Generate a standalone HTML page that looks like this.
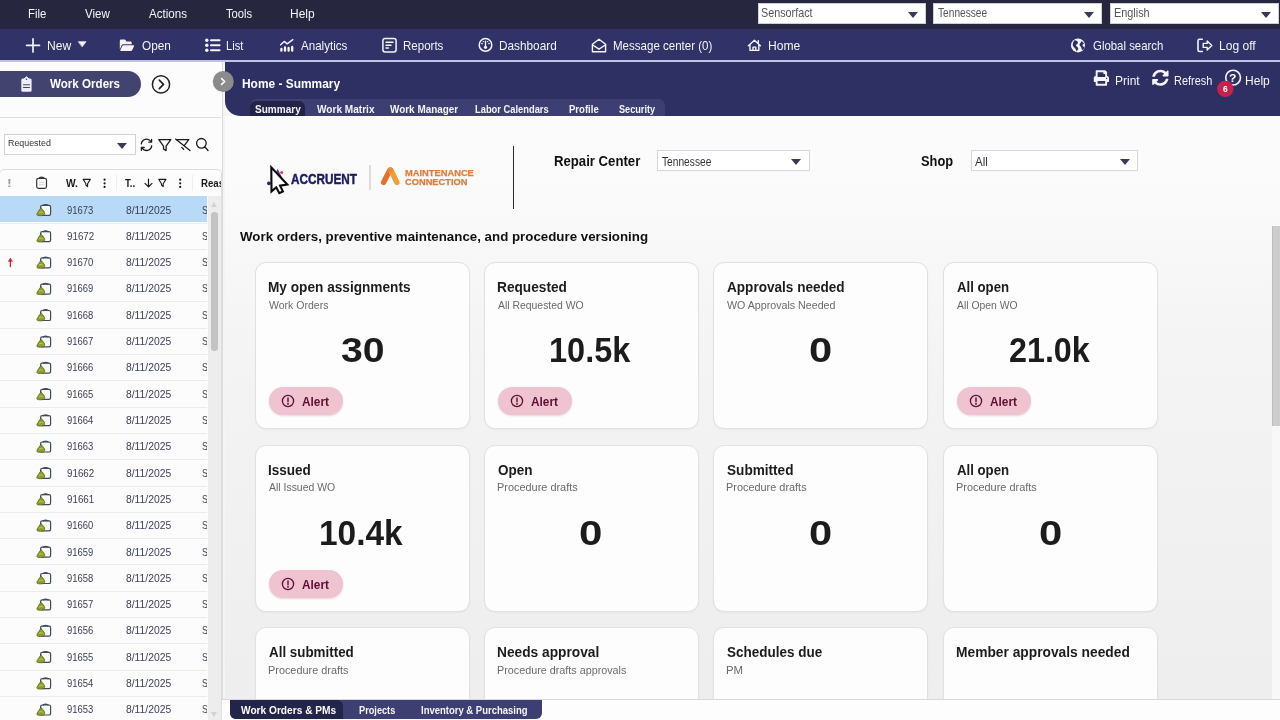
<!DOCTYPE html>
<html lang="en">
<head>
<meta charset="utf-8">
<title>Home - Summary</title>
<style>
*{box-sizing:border-box;margin:0;padding:0}
html,body{width:1280px;height:720px;overflow:hidden;background:#f6f6f6;font-family:"Liberation Sans",sans-serif;color:#111}
#app{position:relative;width:1280px;height:720px;overflow:hidden}
.abs,.layer,.t,.card,.alert,.rl,.selbox{position:absolute}
.layer{left:0;top:0;width:1280px;height:720px;pointer-events:none;will-change:transform}
#left-text{width:221px;overflow:hidden}
#rows-text{width:207px;overflow:hidden}
.t{white-space:pre;line-height:1;transform-origin:0 50%}
svg{overflow:visible}
#menubar{left:0;top:0;width:1280px;height:28.5px;background:#26273f}
#toolbar{left:0;top:28.5px;width:1280px;height:31.5px;background:#303268}
#toolline{left:0;top:60.1px;width:1280px;height:1.8px;background:#bfc2e6}
.selbox{background:#fff;border:1px solid #cfcfd6}
.caret{position:absolute;width:0;height:0;border-left:5.6px solid transparent;border-right:5.6px solid transparent;border-top:6.6px solid #3a3a58}
#leftbg{left:0;top:61.6px;width:221.5px;height:659px;background:#fcfcfc}
#splitter{left:221.5px;top:61.6px;width:3.5px;height:659px;background:#f4f4f4;border-left:1px solid #dcdcdc}
#pill{left:-20px;top:70.7px;width:161px;height:26px;border-radius:13px;background:#42446f}
#gridbox{left:-1px;top:169.2px;width:222.5px;height:560px;border:1px solid #dedede;border-radius:5px 5px 0 0;background:#fcfcfc}
#rowsel{left:0;top:196.2px;width:207px;height:26.3px;background:#b9daf6}
.rl{left:0;width:207px;height:1px;background:#ececec}
#vtrack{left:207.5px;top:196.2px;width:13.5px;height:524px;background:#ededed}
#vthumb{left:211px;top:212px;width:6.5px;height:139px;background:#c4c4c4;border-radius:3px}
#header{left:225px;top:61.6px;width:1056px;height:54.6px;background:#2e3064;border-bottom-left-radius:15px}
#tabstrip{left:250px;top:99px;width:414.5px;height:17.2px;background:#3d3f72;border-radius:7px 7px 0 0}
#tabact{left:250px;top:100.5px;width:54.5px;height:15.7px;background:#222347;border-radius:6px 6px 0 0}
#contentbg{left:225px;top:116.2px;width:1055px;height:583px;background:linear-gradient(#fcfcfc 0,#f9f9f9 18%,#f3f3f3 45%,#eeeeee 100%)}
.card{width:215.2px;height:167.0px;background:#fdfdfd;border:1px solid #e1e1e1;border-radius:11px;box-shadow:0 1px 2px rgba(0,0,0,.04)}
.alert{width:74.5px;height:27.6px;border-radius:14px;background:#efc3d0;box-shadow:0 1px 2px rgba(120,40,70,.18)}
#rtrack{left:1271.5px;top:226px;width:9px;height:473px;background:#f8f8f8}
#rthumb{left:1271.5px;top:226px;width:9px;height:200px;background:#cdcdcd;border-left:1px solid #bdbdbd}
#bottombar{left:222px;top:699px;width:1058px;height:21px;background:#fdfdfd;border-top:1px solid #d9d9d9}
#btabs{left:230px;top:700px;width:312px;height:19.3px;background:#3d3f72;border-radius:0 0 6px 6px}
#btabact{left:230px;top:700px;width:112.5px;height:19.3px;background:#232449;border-radius:0 6px 0 6px}
</style>
</head>
<body>
<div id="app">

<!-- ================= MENU BAR ================= -->
<div id="menubar" class="abs"></div>
<div class="selbox" style="left:757.8px;top:2.8px;width:168.6px;height:20.8px"></div>
<div class="selbox" style="left:933.3px;top:2.8px;width:168.4px;height:20.8px"></div>
<div class="selbox" style="left:1110px;top:2.8px;width:169.2px;height:20.8px"></div>
<i class="caret" style="left:908.2px;top:11.9px"></i>
<i class="caret" style="left:1083.7px;top:11.9px"></i>
<i class="caret" style="left:1260.6px;top:11.9px"></i>
<div class="layer" id="menu-text">
<span class="t" style="left:27.5px;top:8px;font-size:12.5px;color:#f4f4fa;transform:scaleX(0.911);">File</span>
<span class="t" style="left:84.5px;top:8px;font-size:12.5px;color:#f4f4fa;transform:scaleX(0.922);">View</span>
<span class="t" style="left:148.7px;top:8px;font-size:12.5px;color:#f4f4fa;transform:scaleX(0.927);">Actions</span>
<span class="t" style="left:225.8px;top:8px;font-size:12.5px;color:#f4f4fa;transform:scaleX(0.897);">Tools</span>
<span class="t" style="left:290.4px;top:8px;font-size:12.5px;color:#f4f4fa;transform:scaleX(0.956);">Help</span>
<span class="t" style="left:760.9px;top:7px;font-size:12px;color:#555;transform:scaleX(0.898);">Sensorfact</span>
<span class="t" style="left:937.9px;top:7px;font-size:12px;color:#555;transform:scaleX(0.847);">Tennessee</span>
<span class="t" style="left:1113.7px;top:7px;font-size:12px;color:#555;transform:scaleX(0.905);">English</span>
</div>

<!-- ================= TOOLBAR ================= -->
<div id="toolbar" class="abs"></div>
<div id="toolline" class="abs"></div>
<svg class="abs" style="left:0;top:0" width="1280" height="62" viewBox="0 0 1280 62" fill="none" stroke="#f4f4fa" stroke-linecap="round" stroke-linejoin="round">
  <path d="M26.6 45.3H39.5M33 38.8V51.9" stroke-width="1.7"/>
  <path d="M78.6 41.7h7.4l-3.7 4.9z" fill="#f4f4fa" stroke-width=".7"/>
  <g transform="translate(119.8 37.550) scale(.0248 .0300)"><path d="M572.694 292.093L500.27 416.248A63.997 63.997 0 0 1 444.989 448H45.025c-18.523 0-30.064-20.093-20.731-36.093l72.424-124.155A64 64 0 0 1 152 256h399.964c18.523 0 30.064 20.093 20.73 36.093zM152 224h328v-48c0-26.51-21.49-48-48-48H272l-64-64H48C21.49 64 0 85.49 0 112v278.046l69.077-118.418C86.214 242.25 117.989 224 152 224z" fill="#f4f4fa" stroke="none"/></g>
  <g stroke-width="2.1"><path d="M211 40.3H219.5M211 45.3H219.5M211 50.3H219.5"/></g>
  <g fill="#f4f4fa" stroke="none"><circle cx="206.8" cy="40.3" r="1.7"/><circle cx="206.8" cy="45.3" r="1.7"/><circle cx="206.8" cy="50.3" r="1.7"/></g>
  <path d="M280.6 44.8L284.2 41.4L287.2 43.9L292.8 39.6" stroke-width="1.4"/>
  <path d="M281.4 49V50.7M285 47.5V50.7M288.6 48V50.7M292.2 47V50.7" stroke-width="2.3"/>
  <rect x="382.9" y="38.5" width="13.2" height="13.4" rx="2.2" stroke-width="1.5"/>
  <path d="M386 42.3H393M386 45.2H391M386 48.1H388.3" stroke-width="1.5"/>
  <circle cx="485.5" cy="44.9" r="6.3" stroke-width="1.5"/>
  <path d="M485.5 41.2V46.6" stroke-width="1.3"/>
  <g fill="#f4f4fa" stroke="none"><circle cx="485.5" cy="47.3" r="1.6"/><circle cx="482" cy="43.6" r=".8"/><circle cx="489" cy="43.6" r=".8"/><circle cx="483.4" cy="41.6" r=".7"/><circle cx="487.6" cy="41.6" r=".7"/></g>
  <path d="M592.4 44.3L599 39.2L605.6 44.3V51.8H592.4Z" stroke-width="1.4"/>
  <path d="M592.7 45L599 49.2L605.3 45" stroke-width="1.4"/>
  <path d="M748.4 45.7L754.4 40.2L760.4 45.7M750 44.6V50.4H758.8V44.6M753 50.4V47.1H755.8V50.4M758.3 40.6V42.6" stroke-width="1.4"/>
  <circle cx="1078" cy="45.4" r="7" fill="#f4f4fa" stroke="none"/>
  <path d="M1074.2 40.4c1.6-.3 3 .5 3.6 1.7.5 1.1-.4 1.9-1.3 2.5-1 .7-.3 1.9.7 2.3 1.2.5 1.4 1.7.7 2.7l-1.2 2c-.6-1.5-1.1-2.9-2.2-3.9-1.1-1-2.2-2.4-1.7-4 .3-1.2.6-2.3 1.4-3.3zM1081.3 41.3c.9.3 2 1.2 2.7 2.4-.9.2-1.6.900-1.5 1.9.1 1 1.2 1.3 2.1 1.2-.2 1.3-.8 2.5-1.7 3.4-.9-.5-1.5-1.4-1.6-2.4-.1-1-1.1-1.5-1.6-2.3-.5-.9.1-1.8.7-2.5.4-.5.7-1.1.9-1.7z" fill="#2c2e63" stroke="none"/>
  <path d="M1202.3 39.3H1199.6a1.6 1.6 0 0 0-1.6 1.6V49.9a1.6 1.6 0 0 0 1.6 1.6H1202.3" stroke-width="1.6"/>
  <path d="M1203.2 43.4H1207.2V40.9L1211.8 45.4L1207.2 49.9V47.4H1203.2Z" stroke-width="1.4"/>
</svg>
<div class="layer" id="tool-text">
<span class="t" style="left:46.9px;top:40px;font-size:12.6px;color:#f4f4fa;transform:scaleX(0.963);">New</span>
<span class="t" style="left:142.3px;top:40px;font-size:12.6px;color:#f4f4fa;transform:scaleX(0.937);">Open</span>
<span class="t" style="left:226.4px;top:40px;font-size:12.6px;color:#f4f4fa;transform:scaleX(0.884);">List</span>
<span class="t" style="left:301.0px;top:40px;font-size:12.6px;color:#f4f4fa;transform:scaleX(0.920);">Analytics</span>
<span class="t" style="left:403.2px;top:40px;font-size:12.6px;color:#f4f4fa;transform:scaleX(0.916);">Reports</span>
<span class="t" style="left:499.4px;top:40px;font-size:12.6px;color:#f4f4fa;transform:scaleX(0.937);">Dashboard</span>
<span class="t" style="left:612.9px;top:40px;font-size:12.6px;color:#f4f4fa;transform:scaleX(0.916);">Message center (0)</span>
<span class="t" style="left:768.0px;top:40px;font-size:12.6px;color:#f4f4fa;transform:scaleX(0.962);">Home</span>
<span class="t" style="left:1092.5px;top:40px;font-size:12.6px;color:#f4f4fa;transform:scaleX(0.906);">Global search</span>
<span class="t" style="left:1218.6px;top:40px;font-size:12.6px;color:#f4f4fa;transform:scaleX(0.958);">Log off</span>
</div>

<!-- ================= LEFT PANEL ================= -->
<div id="leftbg" class="abs"></div>
<div id="pill" class="abs"></div>
<div class="abs" style="left:0;top:116.8px;width:221px;height:1px;background:#dfdfdf"></div>
<div class="selbox" style="left:4.3px;top:134.3px;width:131.8px;height:20.4px;border-color:#d2d2d2"></div>
<i class="caret" style="left:117.2px;top:143.2px;border-left-width:5.2px;border-right-width:5.2px;border-top-width:6.4px"></i>
<div id="gridbox" class="abs"></div>
<div id="rowsel" class="abs"></div>
<div class="rl" style="top:222.5px"></div><div class="rl" style="top:248.8px"></div><div class="rl" style="top:275.1px"></div><div class="rl" style="top:301.4px"></div><div class="rl" style="top:327.7px"></div><div class="rl" style="top:354.0px"></div><div class="rl" style="top:380.3px"></div><div class="rl" style="top:406.6px"></div><div class="rl" style="top:432.9px"></div><div class="rl" style="top:459.2px"></div><div class="rl" style="top:485.5px"></div><div class="rl" style="top:511.8px"></div><div class="rl" style="top:538.1px"></div><div class="rl" style="top:564.4px"></div><div class="rl" style="top:590.7px"></div><div class="rl" style="top:617.0px"></div><div class="rl" style="top:643.3px"></div><div class="rl" style="top:669.6px"></div><div class="rl" style="top:695.9px"></div><div class="rl" style="top:722.2px"></div>
<div id="vtrack" class="abs"></div>
<div id="vthumb" class="abs"></div>
<div class="abs" style="left:210.8px;top:201.5px;width:0;height:0;border-left:3.8px solid transparent;border-right:3.8px solid transparent;border-bottom:5px solid #d3d3d3"></div>
<div class="abs" style="left:210.8px;top:711.5px;width:0;height:0;border-left:3.8px solid transparent;border-right:3.8px solid transparent;border-top:5px solid #d3d3d3"></div>
<div class="abs" style="left:116.2px;top:175px;width:1px;height:16px;background:#ededed"></div>
<div class="abs" style="left:192.3px;top:175px;width:1px;height:16px;background:#ededed"></div>
<svg class="abs" style="left:0;top:0" width="226" height="720" viewBox="0 0 226 720" fill="none" stroke-linecap="round" stroke-linejoin="round">
  <!-- work orders clipboard -->
  <rect x="21.3" y="78.6" width="10.3" height="13.2" rx="1.5" fill="#eeeefc"/>
  <path d="M23.8 79.2L26.450 76.7L29.1 79.2Z" fill="#eeeefc" stroke="#eeeefc" stroke-width="1"/>
  <circle cx="26.450" cy="79.3" r=".8" fill="#42446f"/>
  <path d="M23.4 84.8H29.5M23.4 87.5H29.5" stroke="#42446f" stroke-width="1.1"/>
  <!-- circle arrow -->
  <circle cx="161" cy="84.4" r="8.6" stroke="#222" stroke-width="1.5"/>
  <path d="M159.3 80.2L163.5 84.4L159.3 88.6" stroke="#222" stroke-width="1.7"/>
  <!-- list toolbar icons -->
  <g stroke="#1a1a1a" stroke-width="1.3">
    <path d="M141.3 143.8a5.3 5.3 0 0 1 9.6-2.4M151.7 145.8a5.3 5.3 0 0 1-9.6 2.4"/>
    <path d="M151.6 139.3V142.1H148.8M141.4 150.3V147.5H144.2"/>
    <path d="M201.4 143.3m-4.8 0a4.8 4.8 0 1 0 9.6 0a4.8 4.8 0 1 0-9.6 0M204.9 146.9L208 150.5"/>
    <path d="M176.6 139.6H188.8L184.2 145.6M181.7 147.4L183.6 149.2"/>
    <path d="M175.6 139.1L190 150.5"/>
  </g>
  <path d="M158.8 139.6H170.8L166.1 146.1V150.6L163.5 149.0V146.1Z" fill="none" stroke="#1a1a1a" stroke-width="1.3" stroke-linejoin="round"/>
  <!-- grid header icons -->
  <rect x="36.7" y="178.3" width="9.8" height="10" rx="1.8" stroke="#333" stroke-width="1.2"/>
  <path d="M39.3 178.2c0-1.4 4.6-1.4 4.6 0" stroke="#333" stroke-width="1.2"/>
  <path d="M39.4 182.3H43.8M39.4 184.8H43.8" stroke="#cfcfcf" stroke-width="1"/>
  <path d="M83.2 179.4H90.3L87.6 183.7V186.6L85.9 185.0V183.7Z" fill="none" stroke="#1a1a1a" stroke-width="1.1" stroke-linejoin="round"/>
  <path d="M158.8 179.4H165.9L163.2 183.7V186.6L161.5 185.0V183.7Z" fill="none" stroke="#1a1a1a" stroke-width="1.1" stroke-linejoin="round"/>
  <g fill="#1a1a1a"><circle cx="104.6" cy="179.7" r="1.1"/><circle cx="104.6" cy="183.3" r="1.1"/><circle cx="104.6" cy="186.9" r="1.1"/>
  <circle cx="180.2" cy="179.7" r="1.1"/><circle cx="180.2" cy="183.3" r="1.1"/><circle cx="180.2" cy="186.9" r="1.1"/></g>
  <path d="M148.5 179V186.6M145 183.4L148.5 186.9L152 183.4" stroke="#1a1a1a" stroke-width="1.2"/>
  <!-- priority arrow -->
  <path d="M10.4 259V266.6" stroke="#d0202a" stroke-width="1.3"/><path d="M8.5 261.2L10.4 258.3L12.3 261.2Z" fill="#d0202a" stroke="#d0202a" stroke-width=".6"/>
  <!-- row icons -->
  <g transform="translate(0,204.2)"><rect x="40.6" y="1.1" width="10" height="10" rx="1.6" fill="#fbfbf6" stroke="#3f4a60" stroke-width="1.2"/><path d="M43.2 1.2c0-1.2 4.8-1.2 4.8 0" fill="#3f4a60" stroke="#3f4a60" stroke-width="1.2"/><path d="M40.9 3.6c1 .8 2.6 2.6 3.6 4.4.6 1.2-.2 2.6-1 3.1-1.3.500-4.3.500-5.8.100-.9-.3-1.1-1.1-.5-2 .8-1.7 2.5-3.9 3.7-5.6z" fill="#8f9d2a" stroke="#4d5a12" stroke-width=".7"/><path d="M39.2 8.2c1.2-.8 3-.8 3.8.2" fill="none" stroke="#c5cf68" stroke-width=".9"/></g><g transform="translate(0,230.5)"><rect x="40.6" y="1.1" width="10" height="10" rx="1.6" fill="#fbfbf6" stroke="#3f4a60" stroke-width="1.2"/><path d="M43.2 1.2c0-1.2 4.8-1.2 4.8 0" fill="#3f4a60" stroke="#3f4a60" stroke-width="1.2"/><path d="M40.9 3.6c1 .8 2.6 2.6 3.6 4.4.6 1.2-.2 2.6-1 3.1-1.3.500-4.3.500-5.8.100-.9-.3-1.1-1.1-.5-2 .8-1.7 2.5-3.9 3.7-5.6z" fill="#8f9d2a" stroke="#4d5a12" stroke-width=".7"/><path d="M39.2 8.2c1.2-.8 3-.8 3.8.2" fill="none" stroke="#c5cf68" stroke-width=".9"/></g><g transform="translate(0,256.8)"><rect x="40.6" y="1.1" width="10" height="10" rx="1.6" fill="#fbfbf6" stroke="#3f4a60" stroke-width="1.2"/><path d="M43.2 1.2c0-1.2 4.8-1.2 4.8 0" fill="#3f4a60" stroke="#3f4a60" stroke-width="1.2"/><path d="M40.9 3.6c1 .8 2.6 2.6 3.6 4.4.6 1.2-.2 2.6-1 3.1-1.3.500-4.3.500-5.8.100-.9-.3-1.1-1.1-.5-2 .8-1.7 2.5-3.9 3.7-5.6z" fill="#8f9d2a" stroke="#4d5a12" stroke-width=".7"/><path d="M39.2 8.2c1.2-.8 3-.8 3.8.2" fill="none" stroke="#c5cf68" stroke-width=".9"/></g><g transform="translate(0,283.1)"><rect x="40.6" y="1.1" width="10" height="10" rx="1.6" fill="#fbfbf6" stroke="#3f4a60" stroke-width="1.2"/><path d="M43.2 1.2c0-1.2 4.8-1.2 4.8 0" fill="#3f4a60" stroke="#3f4a60" stroke-width="1.2"/><path d="M40.9 3.6c1 .8 2.6 2.6 3.6 4.4.6 1.2-.2 2.6-1 3.1-1.3.500-4.3.500-5.8.100-.9-.3-1.1-1.1-.5-2 .8-1.7 2.5-3.9 3.7-5.6z" fill="#8f9d2a" stroke="#4d5a12" stroke-width=".7"/><path d="M39.2 8.2c1.2-.8 3-.8 3.8.2" fill="none" stroke="#c5cf68" stroke-width=".9"/></g><g transform="translate(0,309.4)"><rect x="40.6" y="1.1" width="10" height="10" rx="1.6" fill="#fbfbf6" stroke="#3f4a60" stroke-width="1.2"/><path d="M43.2 1.2c0-1.2 4.8-1.2 4.8 0" fill="#3f4a60" stroke="#3f4a60" stroke-width="1.2"/><path d="M40.9 3.6c1 .8 2.6 2.6 3.6 4.4.6 1.2-.2 2.6-1 3.1-1.3.500-4.3.500-5.8.100-.9-.3-1.1-1.1-.5-2 .8-1.7 2.5-3.9 3.7-5.6z" fill="#8f9d2a" stroke="#4d5a12" stroke-width=".7"/><path d="M39.2 8.2c1.2-.8 3-.8 3.8.2" fill="none" stroke="#c5cf68" stroke-width=".9"/></g><g transform="translate(0,335.7)"><rect x="40.6" y="1.1" width="10" height="10" rx="1.6" fill="#fbfbf6" stroke="#3f4a60" stroke-width="1.2"/><path d="M43.2 1.2c0-1.2 4.8-1.2 4.8 0" fill="#3f4a60" stroke="#3f4a60" stroke-width="1.2"/><path d="M40.9 3.6c1 .8 2.6 2.6 3.6 4.4.6 1.2-.2 2.6-1 3.1-1.3.500-4.3.500-5.8.100-.9-.3-1.1-1.1-.5-2 .8-1.7 2.5-3.9 3.7-5.6z" fill="#8f9d2a" stroke="#4d5a12" stroke-width=".7"/><path d="M39.2 8.2c1.2-.8 3-.8 3.8.2" fill="none" stroke="#c5cf68" stroke-width=".9"/></g><g transform="translate(0,362.0)"><rect x="40.6" y="1.1" width="10" height="10" rx="1.6" fill="#fbfbf6" stroke="#3f4a60" stroke-width="1.2"/><path d="M43.2 1.2c0-1.2 4.8-1.2 4.8 0" fill="#3f4a60" stroke="#3f4a60" stroke-width="1.2"/><path d="M40.9 3.6c1 .8 2.6 2.6 3.6 4.4.6 1.2-.2 2.6-1 3.1-1.3.500-4.3.500-5.8.100-.9-.3-1.1-1.1-.5-2 .8-1.7 2.5-3.9 3.7-5.6z" fill="#8f9d2a" stroke="#4d5a12" stroke-width=".7"/><path d="M39.2 8.2c1.2-.8 3-.8 3.8.2" fill="none" stroke="#c5cf68" stroke-width=".9"/></g><g transform="translate(0,388.3)"><rect x="40.6" y="1.1" width="10" height="10" rx="1.6" fill="#fbfbf6" stroke="#3f4a60" stroke-width="1.2"/><path d="M43.2 1.2c0-1.2 4.8-1.2 4.8 0" fill="#3f4a60" stroke="#3f4a60" stroke-width="1.2"/><path d="M40.9 3.6c1 .8 2.6 2.6 3.6 4.4.6 1.2-.2 2.6-1 3.1-1.3.500-4.3.500-5.8.100-.9-.3-1.1-1.1-.5-2 .8-1.7 2.5-3.9 3.7-5.6z" fill="#8f9d2a" stroke="#4d5a12" stroke-width=".7"/><path d="M39.2 8.2c1.2-.8 3-.8 3.8.2" fill="none" stroke="#c5cf68" stroke-width=".9"/></g><g transform="translate(0,414.6)"><rect x="40.6" y="1.1" width="10" height="10" rx="1.6" fill="#fbfbf6" stroke="#3f4a60" stroke-width="1.2"/><path d="M43.2 1.2c0-1.2 4.8-1.2 4.8 0" fill="#3f4a60" stroke="#3f4a60" stroke-width="1.2"/><path d="M40.9 3.6c1 .8 2.6 2.6 3.6 4.4.6 1.2-.2 2.6-1 3.1-1.3.500-4.3.500-5.8.100-.9-.3-1.1-1.1-.5-2 .8-1.7 2.5-3.9 3.7-5.6z" fill="#8f9d2a" stroke="#4d5a12" stroke-width=".7"/><path d="M39.2 8.2c1.2-.8 3-.8 3.8.2" fill="none" stroke="#c5cf68" stroke-width=".9"/></g><g transform="translate(0,440.9)"><rect x="40.6" y="1.1" width="10" height="10" rx="1.6" fill="#fbfbf6" stroke="#3f4a60" stroke-width="1.2"/><path d="M43.2 1.2c0-1.2 4.8-1.2 4.8 0" fill="#3f4a60" stroke="#3f4a60" stroke-width="1.2"/><path d="M40.9 3.6c1 .8 2.6 2.6 3.6 4.4.6 1.2-.2 2.6-1 3.1-1.3.500-4.3.500-5.8.100-.9-.3-1.1-1.1-.5-2 .8-1.7 2.5-3.9 3.7-5.6z" fill="#8f9d2a" stroke="#4d5a12" stroke-width=".7"/><path d="M39.2 8.2c1.2-.8 3-.8 3.8.2" fill="none" stroke="#c5cf68" stroke-width=".9"/></g><g transform="translate(0,467.2)"><rect x="40.6" y="1.1" width="10" height="10" rx="1.6" fill="#fbfbf6" stroke="#3f4a60" stroke-width="1.2"/><path d="M43.2 1.2c0-1.2 4.8-1.2 4.8 0" fill="#3f4a60" stroke="#3f4a60" stroke-width="1.2"/><path d="M40.9 3.6c1 .8 2.6 2.6 3.6 4.4.6 1.2-.2 2.6-1 3.1-1.3.500-4.3.500-5.8.100-.9-.3-1.1-1.1-.5-2 .8-1.7 2.5-3.9 3.7-5.6z" fill="#8f9d2a" stroke="#4d5a12" stroke-width=".7"/><path d="M39.2 8.2c1.2-.8 3-.8 3.8.2" fill="none" stroke="#c5cf68" stroke-width=".9"/></g><g transform="translate(0,493.5)"><rect x="40.6" y="1.1" width="10" height="10" rx="1.6" fill="#fbfbf6" stroke="#3f4a60" stroke-width="1.2"/><path d="M43.2 1.2c0-1.2 4.8-1.2 4.8 0" fill="#3f4a60" stroke="#3f4a60" stroke-width="1.2"/><path d="M40.9 3.6c1 .8 2.6 2.6 3.6 4.4.6 1.2-.2 2.6-1 3.1-1.3.500-4.3.500-5.8.100-.9-.3-1.1-1.1-.5-2 .8-1.7 2.5-3.9 3.7-5.6z" fill="#8f9d2a" stroke="#4d5a12" stroke-width=".7"/><path d="M39.2 8.2c1.2-.8 3-.8 3.8.2" fill="none" stroke="#c5cf68" stroke-width=".9"/></g><g transform="translate(0,519.8)"><rect x="40.6" y="1.1" width="10" height="10" rx="1.6" fill="#fbfbf6" stroke="#3f4a60" stroke-width="1.2"/><path d="M43.2 1.2c0-1.2 4.8-1.2 4.8 0" fill="#3f4a60" stroke="#3f4a60" stroke-width="1.2"/><path d="M40.9 3.6c1 .8 2.6 2.6 3.6 4.4.6 1.2-.2 2.6-1 3.1-1.3.500-4.3.500-5.8.100-.9-.3-1.1-1.1-.5-2 .8-1.7 2.5-3.9 3.7-5.6z" fill="#8f9d2a" stroke="#4d5a12" stroke-width=".7"/><path d="M39.2 8.2c1.2-.8 3-.8 3.8.2" fill="none" stroke="#c5cf68" stroke-width=".9"/></g><g transform="translate(0,546.1)"><rect x="40.6" y="1.1" width="10" height="10" rx="1.6" fill="#fbfbf6" stroke="#3f4a60" stroke-width="1.2"/><path d="M43.2 1.2c0-1.2 4.8-1.2 4.8 0" fill="#3f4a60" stroke="#3f4a60" stroke-width="1.2"/><path d="M40.9 3.6c1 .8 2.6 2.6 3.6 4.4.6 1.2-.2 2.6-1 3.1-1.3.500-4.3.500-5.8.100-.9-.3-1.1-1.1-.5-2 .8-1.7 2.5-3.9 3.7-5.6z" fill="#8f9d2a" stroke="#4d5a12" stroke-width=".7"/><path d="M39.2 8.2c1.2-.8 3-.8 3.8.2" fill="none" stroke="#c5cf68" stroke-width=".9"/></g><g transform="translate(0,572.4)"><rect x="40.6" y="1.1" width="10" height="10" rx="1.6" fill="#fbfbf6" stroke="#3f4a60" stroke-width="1.2"/><path d="M43.2 1.2c0-1.2 4.8-1.2 4.8 0" fill="#3f4a60" stroke="#3f4a60" stroke-width="1.2"/><path d="M40.9 3.6c1 .8 2.6 2.6 3.6 4.4.6 1.2-.2 2.6-1 3.1-1.3.500-4.3.500-5.8.100-.9-.3-1.1-1.1-.5-2 .8-1.7 2.5-3.9 3.7-5.6z" fill="#8f9d2a" stroke="#4d5a12" stroke-width=".7"/><path d="M39.2 8.2c1.2-.8 3-.8 3.8.2" fill="none" stroke="#c5cf68" stroke-width=".9"/></g><g transform="translate(0,598.7)"><rect x="40.6" y="1.1" width="10" height="10" rx="1.6" fill="#fbfbf6" stroke="#3f4a60" stroke-width="1.2"/><path d="M43.2 1.2c0-1.2 4.8-1.2 4.8 0" fill="#3f4a60" stroke="#3f4a60" stroke-width="1.2"/><path d="M40.9 3.6c1 .8 2.6 2.6 3.6 4.4.6 1.2-.2 2.6-1 3.1-1.3.500-4.3.500-5.8.100-.9-.3-1.1-1.1-.5-2 .8-1.7 2.5-3.9 3.7-5.6z" fill="#8f9d2a" stroke="#4d5a12" stroke-width=".7"/><path d="M39.2 8.2c1.2-.8 3-.8 3.8.2" fill="none" stroke="#c5cf68" stroke-width=".9"/></g><g transform="translate(0,625.0)"><rect x="40.6" y="1.1" width="10" height="10" rx="1.6" fill="#fbfbf6" stroke="#3f4a60" stroke-width="1.2"/><path d="M43.2 1.2c0-1.2 4.8-1.2 4.8 0" fill="#3f4a60" stroke="#3f4a60" stroke-width="1.2"/><path d="M40.9 3.6c1 .8 2.6 2.6 3.6 4.4.6 1.2-.2 2.6-1 3.1-1.3.500-4.3.500-5.8.100-.9-.3-1.1-1.1-.5-2 .8-1.7 2.5-3.9 3.7-5.6z" fill="#8f9d2a" stroke="#4d5a12" stroke-width=".7"/><path d="M39.2 8.2c1.2-.8 3-.8 3.8.2" fill="none" stroke="#c5cf68" stroke-width=".9"/></g><g transform="translate(0,651.3)"><rect x="40.6" y="1.1" width="10" height="10" rx="1.6" fill="#fbfbf6" stroke="#3f4a60" stroke-width="1.2"/><path d="M43.2 1.2c0-1.2 4.8-1.2 4.8 0" fill="#3f4a60" stroke="#3f4a60" stroke-width="1.2"/><path d="M40.9 3.6c1 .8 2.6 2.6 3.6 4.4.6 1.2-.2 2.6-1 3.1-1.3.500-4.3.500-5.8.100-.9-.3-1.1-1.1-.5-2 .8-1.7 2.5-3.9 3.7-5.6z" fill="#8f9d2a" stroke="#4d5a12" stroke-width=".7"/><path d="M39.2 8.2c1.2-.8 3-.8 3.8.2" fill="none" stroke="#c5cf68" stroke-width=".9"/></g><g transform="translate(0,677.6)"><rect x="40.6" y="1.1" width="10" height="10" rx="1.6" fill="#fbfbf6" stroke="#3f4a60" stroke-width="1.2"/><path d="M43.2 1.2c0-1.2 4.8-1.2 4.8 0" fill="#3f4a60" stroke="#3f4a60" stroke-width="1.2"/><path d="M40.9 3.6c1 .8 2.6 2.6 3.6 4.4.6 1.2-.2 2.6-1 3.1-1.3.500-4.3.500-5.8.100-.9-.3-1.1-1.1-.5-2 .8-1.7 2.5-3.9 3.7-5.6z" fill="#8f9d2a" stroke="#4d5a12" stroke-width=".7"/><path d="M39.2 8.2c1.2-.8 3-.8 3.8.2" fill="none" stroke="#c5cf68" stroke-width=".9"/></g><g transform="translate(0,703.9)"><rect x="40.6" y="1.1" width="10" height="10" rx="1.6" fill="#fbfbf6" stroke="#3f4a60" stroke-width="1.2"/><path d="M43.2 1.2c0-1.2 4.8-1.2 4.8 0" fill="#3f4a60" stroke="#3f4a60" stroke-width="1.2"/><path d="M40.9 3.6c1 .8 2.6 2.6 3.6 4.4.6 1.2-.2 2.6-1 3.1-1.3.500-4.3.500-5.8.100-.9-.3-1.1-1.1-.5-2 .8-1.7 2.5-3.9 3.7-5.6z" fill="#8f9d2a" stroke="#4d5a12" stroke-width=".7"/><path d="M39.2 8.2c1.2-.8 3-.8 3.8.2" fill="none" stroke="#c5cf68" stroke-width=".9"/></g>
</svg>
<div class="layer" id="left-text">
<span class="t" style="left:50.2px;top:78px;font-size:12.4px;font-weight:bold;color:#fff;transform:scaleX(0.936);">Work Orders</span>
<span class="t" style="left:7.7px;top:138px;font-size:9.6px;color:#333;transform:scaleX(0.924);">Requested</span>
<span class="t" style="left:7.2px;top:178px;font-size:11px;font-weight:bold;color:#a0a0a0;transform:scaleX(1.3);">!</span>
<span class="t" style="left:66.4px;top:179px;font-size:10.4px;font-weight:bold;color:#1a1a1a;transform:scaleX(0.983);">W.</span>
<span class="t" style="left:125.2px;top:179px;font-size:10.4px;font-weight:bold;color:#1a1a1a;transform:scaleX(0.927);">T..</span>
<span class="t" style="left:201.3px;top:179px;font-size:10.4px;font-weight:bold;color:#1a1a1a;transform:scaleX(0.928);">Reas</span>
<span class="t" style="left:66.8px;top:206px;font-size:10.3px;color:#3a3f55;transform:scaleX(0.917);">91673</span>
<span class="t" style="left:125.8px;top:206px;font-size:10.3px;color:#3a3f55;transform:scaleX(1.004);">8/11/2025</span>
<span class="t" style="left:66.8px;top:232px;font-size:10.3px;color:#3a3f55;transform:scaleX(0.950);">91672</span>
<span class="t" style="left:125.8px;top:232px;font-size:10.3px;color:#3a3f55;transform:scaleX(1.004);">8/11/2025</span>
<span class="t" style="left:66.8px;top:258px;font-size:10.3px;color:#3a3f55;transform:scaleX(0.917);">91670</span>
<span class="t" style="left:125.8px;top:258px;font-size:10.3px;color:#3a3f55;transform:scaleX(1.004);">8/11/2025</span>
<span class="t" style="left:66.8px;top:284px;font-size:10.3px;color:#3a3f55;transform:scaleX(0.917);">91669</span>
<span class="t" style="left:125.8px;top:284px;font-size:10.3px;color:#3a3f55;transform:scaleX(1.004);">8/11/2025</span>
<span class="t" style="left:66.8px;top:311px;font-size:10.3px;color:#3a3f55;transform:scaleX(0.917);">91668</span>
<span class="t" style="left:125.8px;top:311px;font-size:10.3px;color:#3a3f55;transform:scaleX(1.004);">8/11/2025</span>
<span class="t" style="left:66.8px;top:337px;font-size:10.3px;color:#3a3f55;transform:scaleX(0.917);">91667</span>
<span class="t" style="left:125.8px;top:337px;font-size:10.3px;color:#3a3f55;transform:scaleX(1.004);">8/11/2025</span>
<span class="t" style="left:66.8px;top:363px;font-size:10.3px;color:#3a3f55;transform:scaleX(0.917);">91666</span>
<span class="t" style="left:125.8px;top:363px;font-size:10.3px;color:#3a3f55;transform:scaleX(1.004);">8/11/2025</span>
<span class="t" style="left:66.8px;top:390px;font-size:10.3px;color:#3a3f55;transform:scaleX(0.917);">91665</span>
<span class="t" style="left:125.8px;top:390px;font-size:10.3px;color:#3a3f55;transform:scaleX(1.004);">8/11/2025</span>
<span class="t" style="left:66.8px;top:416px;font-size:10.3px;color:#3a3f55;transform:scaleX(0.917);">91664</span>
<span class="t" style="left:125.8px;top:416px;font-size:10.3px;color:#3a3f55;transform:scaleX(1.004);">8/11/2025</span>
<span class="t" style="left:66.8px;top:442px;font-size:10.3px;color:#3a3f55;transform:scaleX(0.917);">91663</span>
<span class="t" style="left:125.8px;top:442px;font-size:10.3px;color:#3a3f55;transform:scaleX(1.004);">8/11/2025</span>
<span class="t" style="left:66.8px;top:469px;font-size:10.3px;color:#3a3f55;transform:scaleX(0.950);">91662</span>
<span class="t" style="left:125.8px;top:469px;font-size:10.3px;color:#3a3f55;transform:scaleX(1.004);">8/11/2025</span>
<span class="t" style="left:66.8px;top:495px;font-size:10.3px;color:#3a3f55;transform:scaleX(0.950);">91661</span>
<span class="t" style="left:125.8px;top:495px;font-size:10.3px;color:#3a3f55;transform:scaleX(1.004);">8/11/2025</span>
<span class="t" style="left:66.8px;top:521px;font-size:10.3px;color:#3a3f55;transform:scaleX(0.917);">91660</span>
<span class="t" style="left:125.8px;top:521px;font-size:10.3px;color:#3a3f55;transform:scaleX(1.004);">8/11/2025</span>
<span class="t" style="left:66.8px;top:548px;font-size:10.3px;color:#3a3f55;transform:scaleX(0.917);">91659</span>
<span class="t" style="left:125.8px;top:548px;font-size:10.3px;color:#3a3f55;transform:scaleX(1.004);">8/11/2025</span>
<span class="t" style="left:66.8px;top:574px;font-size:10.3px;color:#3a3f55;transform:scaleX(0.917);">91658</span>
<span class="t" style="left:125.8px;top:574px;font-size:10.3px;color:#3a3f55;transform:scaleX(1.004);">8/11/2025</span>
<span class="t" style="left:66.8px;top:600px;font-size:10.3px;color:#3a3f55;transform:scaleX(0.917);">91657</span>
<span class="t" style="left:125.8px;top:600px;font-size:10.3px;color:#3a3f55;transform:scaleX(1.004);">8/11/2025</span>
<span class="t" style="left:66.8px;top:626px;font-size:10.3px;color:#3a3f55;transform:scaleX(0.917);">91656</span>
<span class="t" style="left:125.8px;top:626px;font-size:10.3px;color:#3a3f55;transform:scaleX(1.004);">8/11/2025</span>
<span class="t" style="left:66.8px;top:653px;font-size:10.3px;color:#3a3f55;transform:scaleX(0.917);">91655</span>
<span class="t" style="left:125.8px;top:653px;font-size:10.3px;color:#3a3f55;transform:scaleX(1.004);">8/11/2025</span>
<span class="t" style="left:66.8px;top:679px;font-size:10.3px;color:#3a3f55;transform:scaleX(0.917);">91654</span>
<span class="t" style="left:125.8px;top:679px;font-size:10.3px;color:#3a3f55;transform:scaleX(1.004);">8/11/2025</span>
<span class="t" style="left:66.8px;top:705px;font-size:10.3px;color:#3a3f55;transform:scaleX(0.917);">91653</span>
<span class="t" style="left:125.8px;top:705px;font-size:10.3px;color:#3a3f55;transform:scaleX(1.004);">8/11/2025</span>
</div>
<div class="layer" id="rows-text">
<span class="t" style="left:201.5px;top:206px;font-size:10.3px;color:#3a3f55;transform:scaleX(0.871);">S</span>
<span class="t" style="left:201.5px;top:232px;font-size:10.3px;color:#3a3f55;transform:scaleX(0.871);">S</span>
<span class="t" style="left:201.5px;top:258px;font-size:10.3px;color:#3a3f55;transform:scaleX(0.871);">S</span>
<span class="t" style="left:201.5px;top:284px;font-size:10.3px;color:#3a3f55;transform:scaleX(0.871);">S</span>
<span class="t" style="left:201.5px;top:311px;font-size:10.3px;color:#3a3f55;transform:scaleX(0.871);">S</span>
<span class="t" style="left:201.5px;top:337px;font-size:10.3px;color:#3a3f55;transform:scaleX(0.871);">S</span>
<span class="t" style="left:201.5px;top:363px;font-size:10.3px;color:#3a3f55;transform:scaleX(0.871);">S</span>
<span class="t" style="left:201.5px;top:390px;font-size:10.3px;color:#3a3f55;transform:scaleX(0.871);">S</span>
<span class="t" style="left:201.5px;top:416px;font-size:10.3px;color:#3a3f55;transform:scaleX(0.871);">S</span>
<span class="t" style="left:201.5px;top:442px;font-size:10.3px;color:#3a3f55;transform:scaleX(0.871);">S</span>
<span class="t" style="left:201.5px;top:469px;font-size:10.3px;color:#3a3f55;transform:scaleX(0.871);">S</span>
<span class="t" style="left:201.5px;top:495px;font-size:10.3px;color:#3a3f55;transform:scaleX(0.871);">S</span>
<span class="t" style="left:201.5px;top:521px;font-size:10.3px;color:#3a3f55;transform:scaleX(0.871);">S</span>
<span class="t" style="left:201.5px;top:548px;font-size:10.3px;color:#3a3f55;transform:scaleX(0.871);">S</span>
<span class="t" style="left:201.5px;top:574px;font-size:10.3px;color:#3a3f55;transform:scaleX(0.871);">S</span>
<span class="t" style="left:201.5px;top:600px;font-size:10.3px;color:#3a3f55;transform:scaleX(0.871);">S</span>
<span class="t" style="left:201.5px;top:626px;font-size:10.3px;color:#3a3f55;transform:scaleX(0.871);">S</span>
<span class="t" style="left:201.5px;top:653px;font-size:10.3px;color:#3a3f55;transform:scaleX(0.871);">S</span>
<span class="t" style="left:201.5px;top:679px;font-size:10.3px;color:#3a3f55;transform:scaleX(0.871);">S</span>
<span class="t" style="left:201.5px;top:705px;font-size:10.3px;color:#3a3f55;transform:scaleX(0.871);">S</span>
</div>
<div id="splitter" class="abs"></div>

<!-- ================= HEADER ================= -->
<div id="header" class="abs"></div>
<div id="tabstrip" class="abs"></div>
<div id="tabact" class="abs"></div>
<svg class="abs" style="left:0;top:0" width="1280" height="120" viewBox="0 0 1280 120" fill="none" stroke-linecap="round" stroke-linejoin="round">
  <circle cx="223.3" cy="81.5" r="10.5" fill="#8b8b8b"/>
  <path d="M221.6 78.6L224.6 81.5L221.6 84.4" stroke="#fff" stroke-width="1.6"/>
  <g transform="translate(1093.8 70.2) scale(.0297 .0305)"><path d="M448 192V77.25c0-8.49-3.37-16.62-9.37-22.63L393.37 9.37c-6-6-14.14-9.37-22.63-9.37H96C78.33 0 64 14.33 64 32v160c-35.35 0-64 28.65-64 64v112c0 8.84 7.16 16 16 16h48v96c0 17.67 14.33 32 32 32h320c17.67 0 32-14.33 32-32v-96h48c8.84 0 16-7.16 16-16V256c0-35.35-28.65-64-64-64zm-64 256H128v-96h256v96zm0-224H128V64h192v48c0 8.84 7.16 16 16 16h48v96zm48 72c-13.25 0-24-10.75-24-24 0-13.26 10.75-24 24-24s24 10.74 24 24c0 13.25-10.75 24-24 24z" fill="#f4f4fa"/></g>
  <g transform="translate(1151.9 69.4) scale(.0330 .0326)"><path d="M370.72 133.28C339.458 104.008 298.888 87.962 255.848 88c-77.458.068-144.328 53.178-162.791 126.85-1.344 5.363-6.122 9.15-11.651 9.15H24.103c-7.498 0-13.194-6.807-11.807-14.176C33.933 94.924 134.813 8 256 8c66.448 0 126.791 26.136 171.315 68.685L463.03 40.97C478.149 25.851 504 36.559 504 57.941V192c0 13.255-10.745 24-24 24H345.941c-21.382 0-32.09-25.851-16.971-40.971l41.75-41.749zM32 296h134.059c21.382 0 32.09 25.851 16.971 40.971l-41.75 41.75c31.262 29.273 71.835 45.319 114.876 45.28 77.418-.07 144.315-53.144 162.787-126.849 1.344-5.363 6.122-9.15 11.651-9.15h57.304c7.498 0 13.194 6.807 11.807 14.176C478.067 417.076 377.187 504 256 504c-66.448 0-126.791-26.136-171.315-68.685L48.97 471.03C33.851 486.149 8 475.441 8 454.059V320c0-13.255 10.745-24 24-24z" fill="#f4f4fa"/></g>
  <circle cx="1233.1" cy="77.6" r="7.4" stroke="#f4f4fa" stroke-width="1.6"/>
  <circle cx="1225.3" cy="88.9" r="8.2" fill="#c6214b"/>
</svg>
<div class="layer" id="head-text">
<span class="t" style="left:241.9px;top:78px;font-size:12.6px;font-weight:bold;color:#fff;transform:scaleX(0.947);">Home - Summary</span>
<span class="t" style="left:255.0px;top:104px;font-size:10.8px;font-weight:bold;color:#f4f4fa;transform:scaleX(0.929);">Summary</span>
<span class="t" style="left:316.8px;top:104px;font-size:10.8px;font-weight:bold;color:#f4f4fa;transform:scaleX(0.934);">Work Matrix</span>
<span class="t" style="left:390.0px;top:104px;font-size:10.8px;font-weight:bold;color:#f4f4fa;transform:scaleX(0.919);">Work Manager</span>
<span class="t" style="left:474.6px;top:104px;font-size:10.8px;font-weight:bold;color:#f4f4fa;transform:scaleX(0.865);">Labor Calendars</span>
<span class="t" style="left:568.8px;top:104px;font-size:10.8px;font-weight:bold;color:#f4f4fa;transform:scaleX(0.885);">Profile</span>
<span class="t" style="left:619.0px;top:104px;font-size:10.8px;font-weight:bold;color:#f4f4fa;transform:scaleX(0.847);">Security</span>
<span class="t" style="left:1114.6px;top:75px;font-size:12.6px;color:#f4f4fa;transform:scaleX(0.952);">Print</span>
<span class="t" style="left:1173.8px;top:75px;font-size:12.6px;color:#f4f4fa;transform:scaleX(0.867);">Refresh</span>
<span class="t" style="left:1245.4px;top:75px;font-size:12.6px;color:#f4f4fa;transform:scaleX(0.956);">Help</span>
<span class="t" style="left:1223.0px;top:85px;font-size:8.8px;font-weight:bold;color:#fff;transform:scaleX(0.960);">6</span>
<span class="t" style="left:1229.2px;top:73px;font-size:11px;font-weight:bold;color:#fff;transform:scaleX(1.1);">?</span>
</div>

<!-- ================= CONTENT ================= -->
<div id="contentbg" class="abs"></div>
<div class="abs" style="left:513px;top:146px;width:1.3px;height:62.5px;background:#2a2a2a"></div>
<div class="abs" style="left:368.5px;top:164.5px;width:2.3px;height:25.3px;background:#dcdcdc"></div>
<div class="selbox" style="left:657px;top:150.4px;width:152.6px;height:20.7px;border-color:#d6d6de"></div>
<i class="caret" style="left:791.4px;top:159.2px"></i>
<div class="selbox" style="left:970.8px;top:150.4px;width:167.7px;height:20.7px;border-color:#d6d6de"></div>
<i class="caret" style="left:1120.2px;top:159.2px"></i>
<div class="card" style="left:254.7px;top:262.0px"></div><div class="alert" style="left:268.6px;top:387.4px"></div><svg class="abs" style="left:281.2px;top:394.0px" width="14" height="14" viewBox="0 0 14 14"><circle cx="7" cy="7" r="5.6" fill="none" stroke="#5c0f33" stroke-width="1.3"/><path d="M7 3.9V7.7" stroke="#5c0f33" stroke-width="1.4" stroke-linecap="round"/><circle cx="7" cy="9.9" r=".9" fill="#5c0f33"/></svg>
<div class="card" style="left:483.8px;top:262.0px"></div><div class="alert" style="left:497.7px;top:387.4px"></div><svg class="abs" style="left:510.3px;top:394.0px" width="14" height="14" viewBox="0 0 14 14"><circle cx="7" cy="7" r="5.6" fill="none" stroke="#5c0f33" stroke-width="1.3"/><path d="M7 3.9V7.7" stroke="#5c0f33" stroke-width="1.4" stroke-linecap="round"/><circle cx="7" cy="9.9" r=".9" fill="#5c0f33"/></svg>
<div class="card" style="left:713.2px;top:262.0px"></div>
<div class="card" style="left:942.6px;top:262.0px"></div><div class="alert" style="left:956.5px;top:387.4px"></div><svg class="abs" style="left:969.1px;top:394.0px" width="14" height="14" viewBox="0 0 14 14"><circle cx="7" cy="7" r="5.6" fill="none" stroke="#5c0f33" stroke-width="1.3"/><path d="M7 3.9V7.7" stroke="#5c0f33" stroke-width="1.4" stroke-linecap="round"/><circle cx="7" cy="9.9" r=".9" fill="#5c0f33"/></svg>
<div class="card" style="left:254.7px;top:444.6px"></div><div class="alert" style="left:268.6px;top:570.0px"></div><svg class="abs" style="left:281.2px;top:576.6px" width="14" height="14" viewBox="0 0 14 14"><circle cx="7" cy="7" r="5.6" fill="none" stroke="#5c0f33" stroke-width="1.3"/><path d="M7 3.9V7.7" stroke="#5c0f33" stroke-width="1.4" stroke-linecap="round"/><circle cx="7" cy="9.9" r=".9" fill="#5c0f33"/></svg>
<div class="card" style="left:483.8px;top:444.6px"></div>
<div class="card" style="left:713.2px;top:444.6px"></div>
<div class="card" style="left:942.6px;top:444.6px"></div>
<div class="card" style="left:254.7px;top:627.2px"></div>
<div class="card" style="left:483.8px;top:627.2px"></div>
<div class="card" style="left:713.2px;top:627.2px"></div>
<div class="card" style="left:942.6px;top:627.2px"></div>
<svg class="abs" style="left:0;top:0" width="1280" height="230" viewBox="0 0 1280 230" fill="none" stroke-linecap="round" stroke-linejoin="round">
  <!-- accruent mark (mostly hidden by pointer) -->
  <path d="M273 178.5L277.6 168.8L282.5 178.5Z" fill="#5a3a9a"/>
  <circle cx="281.7" cy="172.6" r="1.5" fill="#e0405a"/>
  <circle cx="268.9" cy="183.3" r="1.9" fill="#2a2a6a"/>
  <!-- pointer -->
  <path d="M271.3 167.4L271.5 191.4L276.3 187.3L279.3 193.2L282.9 191.5L280.1 185.6L287.3 184.5Z" fill="#fff" stroke="#0a0a0a" stroke-width="2.1" stroke-linejoin="miter"/>
  <!-- maintenance connection mark -->
  <path d="M383.6 182.4L389.8 170.2" stroke="#e66f2a" stroke-width="5.4"/>
  <path d="M391 170.2L396.9 182.4" stroke="#f1a033" stroke-width="5.4"/>
  <circle cx="390.4" cy="170" r="2.7" fill="#ea8a3a"/>
</svg>
<div class="layer" id="content-text">
<span class="t" style="left:290.6px;top:173px;font-size:13.8px;font-weight:bold;color:#1b1b5e;transform:scaleX(0.851);-webkit-text-stroke:.45px #1b1b5e;">ACCRUENT</span>
<span class="t" style="left:405.0px;top:168px;font-size:9.8px;font-weight:bold;color:#e07b39;transform:scaleX(0.951);-webkit-text-stroke:.25px #e07b39;">MAINTENANCE</span>
<span class="t" style="left:405.0px;top:177px;font-size:9.8px;font-weight:bold;color:#e07b39;transform:scaleX(0.948);-webkit-text-stroke:.25px #e07b39;">CONNECTION</span>
<span class="t" style="left:553.6px;top:154px;font-size:14px;font-weight:bold;color:#111;transform:scaleX(0.940);">Repair Center</span>
<span class="t" style="left:662.0px;top:156px;font-size:12px;color:#333;transform:scaleX(0.850);">Tennessee</span>
<span class="t" style="left:921.4px;top:154px;font-size:14px;font-weight:bold;color:#111;transform:scaleX(0.917);">Shop</span>
<span class="t" style="left:974.8px;top:156px;font-size:12px;color:#333;transform:scaleX(0.962);">All</span>
<span class="t" style="left:240.3px;top:230px;font-size:13.4px;font-weight:bold;color:#111;transform:scaleX(0.994);">Work orders, preventive maintenance, and procedure versioning</span>
<span class="t" style="left:267.8px;top:280px;font-size:14.6px;font-weight:bold;color:#1c1c1c;transform:scaleX(0.935);">My open assignments</span>
<span class="t" style="left:268.7px;top:300px;font-size:11.3px;color:#6a6a6a;transform:scaleX(0.931);">Work Orders</span>
<span class="t" style="left:340.5px;top:332px;font-size:35px;font-weight:bold;color:#1c1c1c;transform:scaleX(1.119);">30</span>
<span class="t" style="left:302.0px;top:395px;font-size:13px;font-weight:bold;color:#5c0f33;transform:scaleX(0.910);">Alert</span>
<span class="t" style="left:496.9px;top:280px;font-size:14.6px;font-weight:bold;color:#1c1c1c;transform:scaleX(0.937);">Requested</span>
<span class="t" style="left:497.8px;top:300px;font-size:11.3px;color:#6a6a6a;transform:scaleX(0.922);">All Requested WO</span>
<span class="t" style="left:549.2px;top:332px;font-size:35px;font-weight:bold;color:#1c1c1c;transform:scaleX(0.928);">10.5k</span>
<span class="t" style="left:531.1px;top:395px;font-size:13px;font-weight:bold;color:#5c0f33;transform:scaleX(0.910);">Alert</span>
<span class="t" style="left:727.2px;top:280px;font-size:14.6px;font-weight:bold;color:#1c1c1c;transform:scaleX(0.930);">Approvals needed</span>
<span class="t" style="left:727.2px;top:300px;font-size:11.3px;color:#6a6a6a;transform:scaleX(0.944);">WO Approvals Needed</span>
<span class="t" style="left:809.4px;top:332px;font-size:35px;font-weight:bold;color:#1c1c1c;transform:scaleX(1.188);">0</span>
<span class="t" style="left:956.6px;top:280px;font-size:14.6px;font-weight:bold;color:#1c1c1c;transform:scaleX(0.905);">All open</span>
<span class="t" style="left:956.6px;top:300px;font-size:11.3px;color:#6a6a6a;transform:scaleX(0.918);">All Open WO</span>
<span class="t" style="left:1009.1px;top:332px;font-size:35px;font-weight:bold;color:#1c1c1c;transform:scaleX(0.922);">21.0k</span>
<span class="t" style="left:989.9px;top:395px;font-size:13px;font-weight:bold;color:#5c0f33;transform:scaleX(0.910);">Alert</span>
<span class="t" style="left:267.8px;top:463px;font-size:14.6px;font-weight:bold;color:#1c1c1c;transform:scaleX(0.927);">Issued</span>
<span class="t" style="left:268.7px;top:482px;font-size:11.3px;color:#6a6a6a;transform:scaleX(0.925);">All Issued WO</span>
<span class="t" style="left:318.9px;top:515px;font-size:35px;font-weight:bold;color:#1c1c1c;transform:scaleX(0.955);">10.4k</span>
<span class="t" style="left:302.0px;top:578px;font-size:13px;font-weight:bold;color:#5c0f33;transform:scaleX(0.910);">Alert</span>
<span class="t" style="left:497.8px;top:463px;font-size:14.6px;font-weight:bold;color:#1c1c1c;transform:scaleX(0.924);">Open</span>
<span class="t" style="left:496.8px;top:482px;font-size:11.3px;color:#6a6a6a;transform:scaleX(0.966);">Procedure drafts</span>
<span class="t" style="left:579.4px;top:515px;font-size:35px;font-weight:bold;color:#1c1c1c;transform:scaleX(1.2);">0</span>
<span class="t" style="left:727.2px;top:463px;font-size:14.6px;font-weight:bold;color:#1c1c1c;transform:scaleX(0.932);">Submitted</span>
<span class="t" style="left:726.2px;top:482px;font-size:11.3px;color:#6a6a6a;transform:scaleX(0.965);">Procedure drafts</span>
<span class="t" style="left:809.4px;top:515px;font-size:35px;font-weight:bold;color:#1c1c1c;transform:scaleX(1.188);">0</span>
<span class="t" style="left:956.6px;top:463px;font-size:14.6px;font-weight:bold;color:#1c1c1c;transform:scaleX(0.905);">All open</span>
<span class="t" style="left:955.6px;top:482px;font-size:11.3px;color:#6a6a6a;transform:scaleX(0.967);">Procedure drafts</span>
<span class="t" style="left:1038.7px;top:515px;font-size:35px;font-weight:bold;color:#1c1c1c;transform:scaleX(1.194);">0</span>
<span class="t" style="left:268.7px;top:645px;font-size:14.6px;font-weight:bold;color:#1c1c1c;transform:scaleX(0.917);">All submitted</span>
<span class="t" style="left:267.7px;top:665px;font-size:11.3px;color:#6a6a6a;transform:scaleX(0.963);">Procedure drafts</span>
<span class="t" style="left:496.9px;top:645px;font-size:14.6px;font-weight:bold;color:#1c1c1c;transform:scaleX(0.941);">Needs approval</span>
<span class="t" style="left:496.8px;top:665px;font-size:11.3px;color:#6a6a6a;transform:scaleX(0.954);">Procedure drafts approvals</span>
<span class="t" style="left:727.2px;top:645px;font-size:14.6px;font-weight:bold;color:#1c1c1c;transform:scaleX(0.925);">Schedules due</span>
<span class="t" style="left:726.2px;top:665px;font-size:11.3px;color:#6a6a6a;transform:scaleX(1.007);">PM</span>
<span class="t" style="left:955.7px;top:645px;font-size:14.6px;font-weight:bold;color:#1c1c1c;transform:scaleX(0.944);">Member approvals needed</span>
</div>
<div id="rtrack" class="abs"></div>
<div id="rthumb" class="abs"></div>

<!-- ================= BOTTOM TABS ================= -->
<div id="bottombar" class="abs"></div>
<div id="btabs" class="abs"></div>
<div id="btabact" class="abs"></div>
<div class="layer" id="bottom-text">
<span class="t" style="left:240.7px;top:705px;font-size:10.5px;font-weight:bold;color:#fff;transform:scaleX(0.967);">Work Orders &amp; PMs</span>
<span class="t" style="left:359.4px;top:705px;font-size:10.5px;font-weight:bold;color:#f4f4fa;transform:scaleX(0.876);">Projects</span>
<span class="t" style="left:421.3px;top:705px;font-size:10.5px;font-weight:bold;color:#f4f4fa;transform:scaleX(0.904);">Inventory &amp; Purchasing</span>
</div>

</div>
</body>
</html>
